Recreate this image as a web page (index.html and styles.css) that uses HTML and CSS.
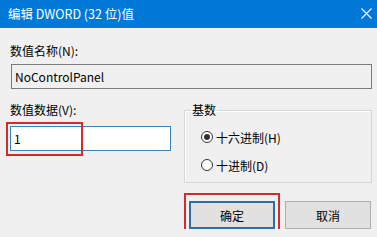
FILE: index.html
```html
<!DOCTYPE html>
<html lang="zh-CN">
    <head>
        <meta charset="UTF-8">
        <title>编辑 DWORD (32 位)值</title>
        <link rel="stylesheet" href="styles.css">
    </head>
    <body>
        <div class="titlebar">
            <span class="title">编辑 DWORD (32 位)值</span>
            <svg class="close" width="11" height="11" viewBox="0 0 11 11">
                <path d="M0.5 0.5 L10.5 10.5 M10.5 0.5 L0.5 10.5" stroke="#fff" stroke-width="1.1" fill="none"/>
            </svg>
        </div>

        <div class="content">
            <div class="label first">数值名称(N):</div>
            <input class="field name" type="text" value="NoControlPanel" readonly>

            <div class="row">
                <div class="col-left">
                    <div class="label">数值数据(V):</div>
                    <div class="mark-wrap">
                        <input class="field data" type="text" value="1">
                        <span class="mark mark-data"></span>
                    </div>
                </div>

                <fieldset class="group">
                    <legend>基数</legend>
                    <div class="radio-row">
                        <span class="radio checked"></span>
                        <span>十六进制(H)</span>
                    </div>
                    <div class="radio-row">
                        <span class="radio"></span>
                        <span>十进制(D)</span>
                    </div>
                </fieldset>
            </div>

            <div class="buttons">
                <span class="mark-wrap">
                    <button class="btn default">确定</button>
                    <span class="mark mark-ok"></span>
                </span>
                <button class="btn">取消</button>
            </div>
        </div>
    </body>
</html>
```

FILE: styles.css
```css
body {
    margin: 0;
    background: #f0f0f0;
    font-family: "Noto Sans CJK SC", "Noto Sans", sans-serif;
    font-size: 12px;
    color: #000;
    overflow: hidden;
}
.titlebar {
    height: 28px;
    background: #0078d7;
    color: #fff;
    display: flex;
    align-items: center;
    justify-content: space-between;
    padding: 0 5px 0 8px;
}
.title { line-height: 28px; font-size: 12.5px; }
.close { margin-top: -1px; }

.content { padding: 0 5px 0 10px; }
.label {
    line-height: 16px;
    margin-top: 13px;
}
.label.first { margin-top: 15px; }

.field {
    display: block;
    box-sizing: border-box;
    height: 25px;
    margin: 5px 0 0 0;
    padding: 0 3px;
    font-family: inherit;
    font-size: 12px;
    color: #000;
    outline: none;
}
.name {
    width: 361px;
    margin-left: 1px;
    background: #f0f0f0;
    border: 1px solid #7a7a7a;
}
.data {
    width: 161px;
    margin-top: 8px;
    background: #fff;
    border: 1px solid #3c82b8;
}

.row {
    display: flex;
    gap: 13px;
}
.col-left { width: 161px; }

.mark-wrap { position: relative; display: inline-block; }
.col-left .mark-wrap { display: block; }
.mark {
    position: absolute;
    border: 2px solid #d42a2a;
    box-sizing: border-box;
    pointer-events: none;
}
.mark-data { left: -4px; top: -4px; width: 77px; height: 34px; }
.mark-ok { left: -5px; top: -8px; width: 96px; height: 41px; }

.group {
    width: 188px;
    box-sizing: border-box;
    margin: 13px 0 0 0;
    padding: 0 0 7px 16px;
    border: 1px solid #d5d5d5;
    box-shadow: inset 1px 1px 0 #fff;
}
.group legend {
    margin-left: -10px;
    padding: 0 1px;
    line-height: 16px;
}
.radio-row {
    display: flex;
    align-items: center;
    gap: 3px;
    height: 20px;
    margin-top: 8px;
}
.radio-row:first-of-type { margin-top: 9px; }
.radio {
    width: 12px;
    height: 12px;
    box-sizing: border-box;
    border: 1px solid #333;
    border-radius: 50%;
    background: #fff;
    position: relative;
}
.radio.checked::after {
    content: "";
    position: absolute;
    left: 2px;
    top: 2px;
    width: 6px;
    height: 6px;
    border-radius: 50%;
    background: #333;
}

.buttons {
    display: flex;
    justify-content: flex-end;
    gap: 10px;
    margin-top: 18px;
    padding-right: 1px;
}
.btn {
    display: block;
    width: 86px;
    height: 28px;
    box-sizing: border-box;
    background: #e1e1e1;
    border: 1px solid #adadad;
    font-family: inherit;
    font-size: 12px;
    color: #000;
    padding: 0;
}
.btn.default { border: 2px solid #2b6ea8; }
```
